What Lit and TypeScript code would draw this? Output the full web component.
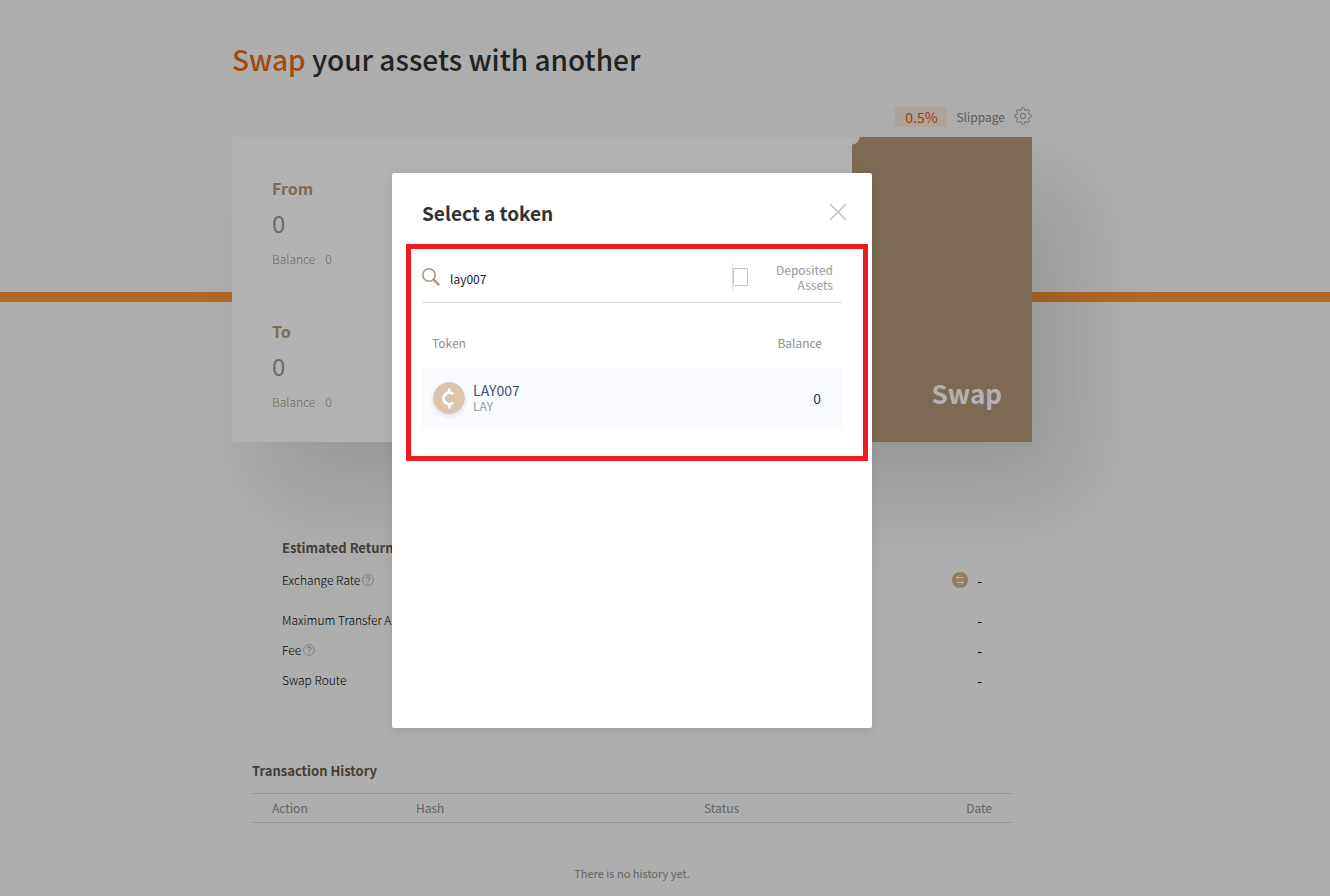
import { LitElement, html, css, svg } from "lit";
import { customElement, state } from "lit/decorators.js";

const help = html`<svg class="help" viewBox="0 0 12 12" aria-hidden="true">
  <circle cx="6" cy="6" r="5.4" fill="none" stroke="currentColor" />
  <path d="M4.1 4.8a1.9 1.7 0 1 1 2.6 1.5q-.7.4-.7 1.2M6 8.4v1.3" fill="none" stroke="currentColor" stroke-width="1.3" />
</svg>`;

const gearPath = (() => {
  const points: string[] = [];
  const steps = 128;
  for (let i = 0; i < steps; i++) {
    const angle = (i / steps) * Math.PI * 2;
    const wave = Math.tanh(2 * Math.cos(angle * 8));
    const r = 7.2 + 1.1 * wave;
    points.push(`${(9 + r * Math.sin(angle)).toFixed(2)} ${(9 - r * Math.cos(angle)).toFixed(2)}`);
  }
  return `M${points.join("L")}Z`;
})();

@customElement("app-root")
export class AppRoot extends LitElement {
  @state() private query = "lay007";

  static styles = css`
    :host {
      display: block;
      position: relative;
      box-sizing: border-box;
      min-height: 100vh;
      background: #f9f9f9;
      color: #323232;
      font: 400 12px/20px "Noto Sans CJK KR", "Noto Sans", sans-serif;
      --gutter: 66px;
    }
    *, *::before, *::after { box-sizing: border-box; }
    h1, h2, h3, p { margin: 0; }
    button, input { font: inherit; color: inherit; border: 0; background: none; padding: 0; margin: 0; }
    button { cursor: pointer; }
    svg { display: block; }

    .page { overflow: hidden; }
    .column { max-width: 800px; margin: 0 auto; }
    .band { padding-right: var(--gutter); }

    .title { padding-top: 35px; font-size: 28px; line-height: 48px; font-weight: 500; }
    .accent { color: #e66c17; }

    .tools { display: flex; justify-content: flex-end; align-items: center; gap: 9px; padding: 23px 0 10px; height: 54px; color: #848484; }
    .chip { width: 52px; border-radius: 2px; background: #f9e9dc; color: #e4581c; font-size: 14px; text-align: center; }
    .gear { padding-bottom: 2px; color: #b0b0b8; }

    .stage { background: linear-gradient(#ff9636, #ff9636) no-repeat 0 calc(50% + 7px) / 100% 10px; }
    .swap { display: flex; min-height: 305px; background: #fff; box-shadow: 40px 50px 80px rgba(0, 10, 36, 0.13); }
    .sides { flex: 1; padding: 39px 40px 20px; display: grid; gap: 43px; align-content: start; }
    .side { display: grid; }
    .side-name { font-size: 16px; line-height: 24px; font-weight: 700; color: #b39878; }
    .amount { width: 100%; height: 44px; font-size: 24px; color: #989898; }
    .side-balance { display: flex; gap: 10px; padding-top: 5px; height: 32px; font-weight: 300; color: #a49079; }
    .go {
      width: 180px; display: flex; align-items: flex-end; justify-content: flex-end; padding: 0 30px 29px;
      font-size: 26px; line-height: 40px; font-weight: 700; color: #fff;
      background: radial-gradient(circle at 0 0, #f9f9f9 7px, #b29878 8px);
    }

    .estimate { padding: 96px 50px 0; }
    .estimate h2, .history h2 { font-size: 13px; line-height: 20px; font-weight: 700; color: #62584e; }
    .rates { margin: 0; padding-top: 7px; }
    .rate { display: flex; justify-content: space-between; align-items: center; height: 30px; font-weight: 300; color: #000; }
    .rate:first-child { margin-bottom: 10px; }
    .rate dt, .rate dd { display: flex; align-items: center; gap: 2px; margin: 0; }
    .rate dd { gap: 9px; font-size: 14px; font-weight: 400; }
    .help { width: 12px; height: 12px; color: #b8b8b8; }

    .history { padding: 66px 20px 0; }
    .table-frame { margin-top: 12px; padding: 0 20px; border: solid #d8d8e2; border-width: 1px 0; }
    table { width: 100%; border-collapse: collapse; table-layout: fixed; }
    th { padding: 0; font-weight: 400; text-align: left; color: #8e8e8e; }
    .history th { height: 28px; width: 20%; }
    .history .wide { width: 40%; }
    th.end, td.end { text-align: right; }
    .empty { padding-top: 40px; text-align: center; font-size: 11px; color: #8e8e8e; }

    .scrim { position: absolute; inset: 0; display: grid; justify-items: center; align-items: start; padding: 173px var(--gutter) 0 0; background: rgba(0, 0, 0, 0.3); }
    .modal { position: relative; width: 480px; max-width: 100%; min-height: 555px; padding: 24px 30px; border-radius: 2px; background: #fff; box-shadow: 0 2px 10px rgba(0, 0, 0, 0.1); }
    .modal-head { display: flex; justify-content: space-between; align-items: center; height: 32px; }
    .modal-head h2 { font-size: 19px; line-height: 32px; font-weight: 700; }
    .close { margin-right: -10px; padding: 0 5px 3px; color: #bcbcbc; }
    .search { display: flex; align-items: center; margin-top: 22px; height: 52px; border-bottom: 1px solid #dbdfe9; color: #222; }
    .search input[type="text"] { flex: 1; min-width: 0; margin-left: 10px; padding-top: 4px; height: 28px; outline: 0; }
    .only { display: flex; align-items: center; width: 110px; height: 28px; padding-right: 10px; border-left: 1px solid #dbdfe9; line-height: 15px; text-align: right; color: #999; }
    .only input { appearance: none; flex: none; width: 15px; height: 18px; border: 1px solid #bfc4d0; border-radius: 1px; }
    .only input:checked { background: #b39878; }
    .only span { flex: 1; padding-left: 28px; }

    .tokens { margin-top: 10px; }
    .tokens th { height: 55px; padding: 4px 10px 0; }
    .tokens th.end { padding-right: 20px; }
    .tokens td { height: 60px; padding: 0 11px; background: #f9fafd; }
    .tokens td.end { padding-right: 21px; font-size: 14px; }
    .token { display: flex; align-items: center; gap: 8px; text-align: left; }
    .coin { border-radius: 50%; box-shadow: 0 2px 4px rgba(0, 0, 0, 0.12); }
    .token-name { display: block; font-size: 14px; line-height: 16px; color: #47516a; }
    .token-code { display: block; line-height: 16px; color: #999; }

    .marker { position: absolute; inset: 71px 4px auto 14px; height: 217px; border: 5px solid #ed1c24; pointer-events: none; }
  `;

  private side(name: string) {
    return html`<div class="side">
      <label class="side-name" for=${name}>${name}</label>
      <input class="amount" id=${name} type="text" value="0" />
      <p class="side-balance"><span>Balance</span><span>0</span></p>
    </div>`;
  }

  private rate(label: string, hint = false, flip = false) {
    return html`<div class="rate">
      <dt>${label}${hint ? help : ""}</dt>
      <dd>
        ${flip
          ? html`<button aria-label="Invert rate"><svg width="16" height="16" viewBox="0 0 16 16">
              <circle cx="8" cy="8" r="8" fill="#d0b086" />
              <path d="M12 5.5H5M7 3.2L4.7 5.5 7 7.8M5 10.5h6.500M9.300 8.200l2.300 2.300-2.300 2.300" fill="none" stroke="#fff" />
            </svg></button>`
          : ""}<span>-</span>
      </dd>
    </div>`;
  }

  render() {
    return html`
      <main class="page">
        <div class="band"><div class="column">
          <h1 class="title"><span class="accent">Swap</span> your assets with another</h1>
          <div class="tools">
            <span class="chip">0.5%</span><span>Slippage</span>
            <button class="gear" aria-label="Slippage settings"><svg width="18" height="18" viewBox="0 0 18 18" fill="none" stroke="currentColor" stroke-width="1.2">
              ${svg`<path d=${gearPath} />`}<circle cx="9" cy="9" r="2.6" />
            </svg></button>
          </div>
        </div></div>
        <div class="band stage">
          <section class="column swap">
            <div class="sides">${this.side("From")}${this.side("To")}</div>
            <button class="go">Swap</button>
          </section>
        </div>
        <div class="band"><div class="column">
          <section class="estimate">
            <h2>Estimated Returns</h2>
            <dl class="rates">
              ${this.rate("Exchange Rate", true, true)}
              ${this.rate("Maximum Transfer Amount")}
              ${this.rate("Fee", true)}
              ${this.rate("Swap Route")}
            </dl>
          </section>
          <section class="history">
            <h2>Transaction History</h2>
            <div class="table-frame"><table>
              <thead><tr><th>Action</th><th class="wide">Hash</th><th>Status</th><th class="end">Date</th></tr></thead>
            </table></div>
            <p class="empty">There is no history yet.</p>
          </section>
        </div></div>
      </main>
      <div class="scrim">
        <div class="modal" role="dialog" aria-labelledby="modal-title">
          <header class="modal-head">
            <h2 id="modal-title">Select a token</h2>
            <button class="close" aria-label="Close"><svg width="18" height="18" viewBox="0 0 18 18"><path d="M1 1l16 16M17 1L1 17" stroke="currentColor" stroke-width="1.3" /></svg></button>
          </header>
          <div class="search">
            <svg width="18" height="18" viewBox="0 0 18 18" fill="none" stroke="#b89b7c" aria-hidden="true">
              <circle cx="7" cy="7" r="6.200" stroke-width="1.6" /><path d="M11.500 11.500l5.700 5.700" stroke-width="2.500" />
            </svg>
            <input type="text" aria-label="Search token" .value=${this.query}
              @input=${(e: Event) => (this.query = (e.target as HTMLInputElement).value)} />
            <label class="only"><input type="checkbox" /><span>Deposited Assets</span></label>
          </div>
          <table class="tokens">
            <thead><tr><th>Token</th><th class="end">Balance</th></tr></thead>
            <tbody><tr>
              <td><button class="token">
                <svg class="coin" width="32" height="32" viewBox="0 0 32 32">
                  <circle cx="16" cy="16" r="16" fill="#dbc6ab" />
                  <path d="M20.300 12.300a5.800 5.800 0 1 0 0 8.400M16.200 6.400v4M16.200 22.400v4" fill="none" stroke="#fff" stroke-width="2.800" />
                </svg>
                <span><span class="token-name">LAY007</span><span class="token-code">LAY</span></span>
              </button></td>
              <td class="end">0</td>
            </tr></tbody>
          </table>
          <div class="marker"></div>
        </div>
      </div>
    `;
  }
}
